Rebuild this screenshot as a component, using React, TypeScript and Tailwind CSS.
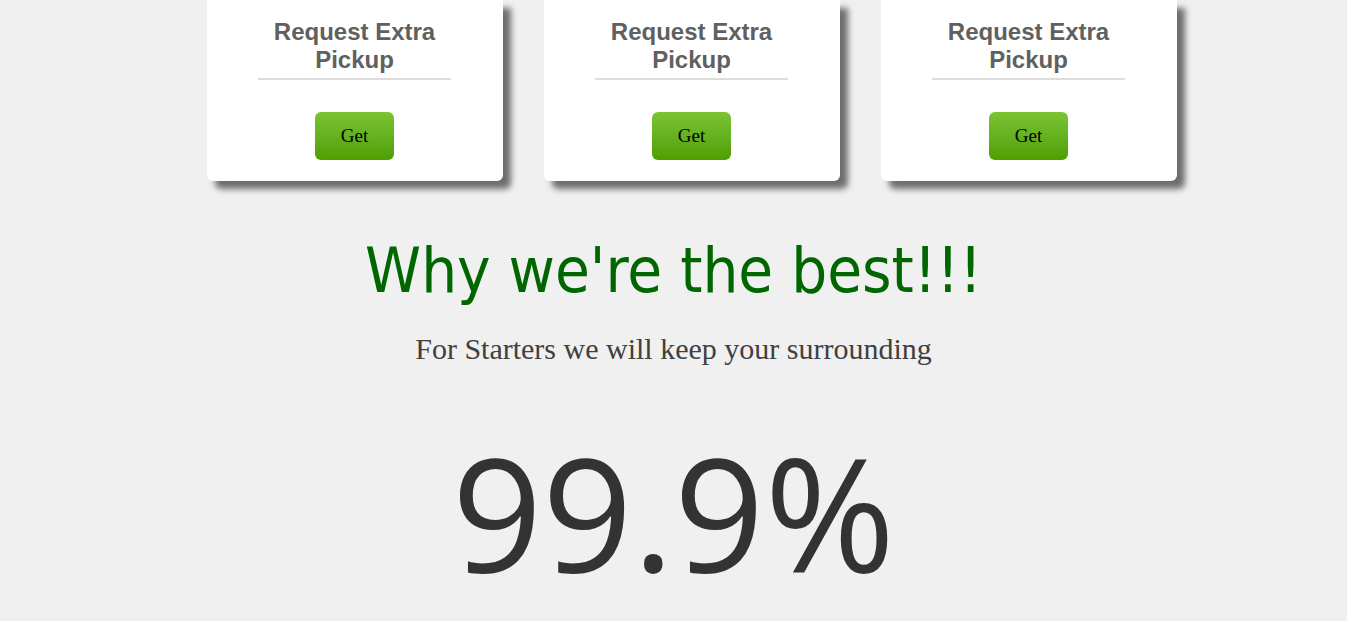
const Card = () => {
  return (
    <div className="w-[296px] bg-white rounded-b-[6px] shadow-[8px_8px_6px_rgba(0,0,0,0.55)] flex flex-col items-center pt-[18px] pb-[21px]">
      <h3 className="text-center font-bold text-[24px] leading-[28px] text-[#606060] font-['Liberation_Sans',Arial,sans-serif]">
        Request Extra
        <br />
        Pickup
      </h3>
      <div className="w-[193px] h-[2px] bg-[#dddddd] mt-[4px]" />
      <button className="mt-[32px] w-[79px] h-[48px] rounded-[6px] bg-gradient-to-b from-[#7cc433] to-[#4e9f00] text-black text-[19px] font-['Liberation_Serif','Times_New_Roman',serif]">
        Get
      </button>
    </div>
  );
};

const App = () => {
  return (
    <div className="min-h-[621px] w-full bg-[#f0f0f0] overflow-hidden">
      {/* Service cards */}
      <div className="flex justify-center gap-[41px] pl-[36px]">
        <Card />
        <Card />
        <Card />
      </div>

      {/* Why section */}
      <div className="flex flex-col items-center">
        <h2 className="mt-[52px] text-[63px] leading-[76px] text-[#006600] font-['DejaVu_Sans',Tahoma,sans-serif] [font-stretch:condensed]">
          Why we're the best!!!
        </h2>
        <p className="mt-[22px] text-[30px] leading-[36px] text-[#404040] font-['Liberation_Serif','Times_New_Roman',serif]">
          For Starters we will keep your surrounding
        </p>
        <div className="mt-[54px] text-[158px] leading-[180px] text-[#333333] font-['Open_Sans','Noto_Sans',sans-serif]">
          99.9%
        </div>
      </div>
    </div>
  );
};

export default App;
